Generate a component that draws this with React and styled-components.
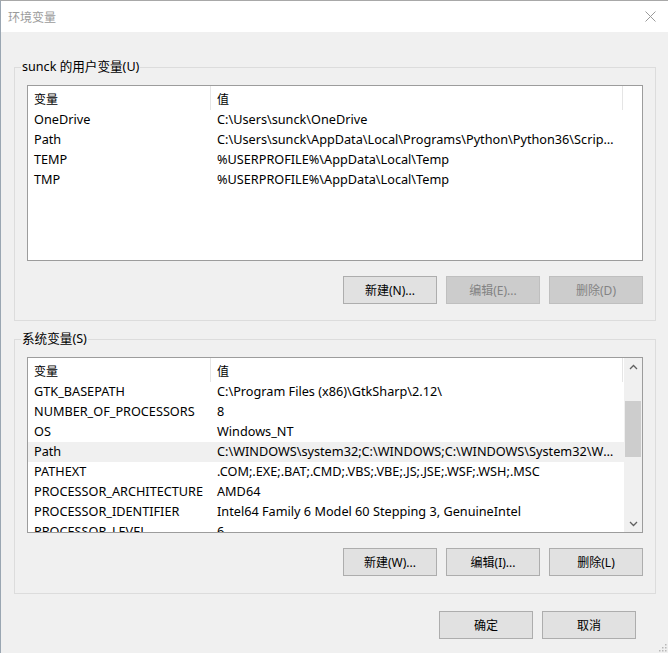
import React from "react";
import styled, { createGlobalStyle } from "styled-components";

const Global = createGlobalStyle`
  html, body { margin: 0; padding: 0; background: #f0f0f0; }
  * { box-sizing: border-box; }
  body { font-family: "Noto Sans", "Noto Sans CJK SC", sans-serif; font-size: 12px; color: #000; }
`;

const Window = styled.div`
  position: relative;
  width: 668px;
  height: 653px;
  background: #f0f0f0;
  border-top: 1px solid #a8a8a8;
  border-left: 1px solid #9aa6b2;
  display: flex;
  flex-direction: column;
  overflow: hidden;
`;

const TitleBar = styled.div`
  height: 31px;
  flex: none;
  background: #fff;
  display: flex;
  align-items: center;
  justify-content: space-between;
  padding: 0 12px 0 7px;
`;

const Title = styled.span`
  font-family: "Noto Sans CJK SC", sans-serif;
  font-size: 12px;
  color: #9b9b9b;
`;

const Body = styled.div`
  flex: 1;
  display: flex;
  flex-direction: column;
  padding: 35px 12px 0 13px;
`;

const Group = styled.div`
  position: relative;
  border: 1px solid #dcdcdc;
  padding: 17px 12px ${(p) => p.$padBottom}px 12px;
  margin-top: ${(p) => p.$mt || 0}px;
  display: flex;
  flex-direction: column;
  gap: 15px;
`;

const Legend = styled.span`
  position: absolute;
  top: -9px;
  left: 6px;
  padding: 0 1px;
  background: #f0f0f0;
  line-height: 16px;
  font-size: 12.6px;
  font-family: "Noto Sans", "Noto Sans CJK SC", sans-serif;
`;

const ListBox = styled.div`
  height: 176px;
  border: 1px solid #9c9c9c;
  background: #fff;
  display: flex;
  overflow: hidden;
`;

const Table = styled.div`
  flex: 1;
  overflow: hidden;
`;

const HeaderRow = styled.div`
  display: grid;
  grid-template-columns: 183px 412px 1fr;
  height: 24px;
`;

const HeaderCell = styled.div`
  display: flex;
  align-items: center;
  padding-left: 6px;
  border-right: ${(p) => (p.$divider ? "1px solid #e5e5e5" : "none")};
  font-family: "Noto Sans CJK SC", sans-serif;
  font-size: 12px;
`;

const Row = styled.div`
  display: grid;
  grid-template-columns: 183px 412px;
  height: 20px;
  background: ${(p) => (p.$hover ? "#f0f0f0" : "transparent")};
`;

const Cell = styled.div`
  padding-left: 6px;
  padding-right: ${(p) => (p.$value ? 5 : 1)}px;
  line-height: 19px;
  font-size: 12.7px;
  white-space: nowrap;
  overflow: hidden;
  text-overflow: ellipsis;
`;

const ScrollBar = styled.div`
  width: 18px;
  flex: none;
  background: #f0f0f0;
  display: flex;
  flex-direction: column;
`;

const Arrow = styled.div`
  height: 17px;
  display: flex;
  align-items: center;
  justify-content: center;
`;

const Track = styled.div`
  flex: 1;
  display: flex;
  flex-direction: column;
  padding: 26px 1px 0 1px;
`;

const Thumb = styled.div`
  height: 56px;
  background: #cdcdcd;
`;

const ButtonRow = styled.div`
  display: flex;
  justify-content: flex-end;
  gap: 9px;
  padding-right: ${(p) => p.$pr || 0}px;
  margin-top: ${(p) => p.$mt || 0}px;
`;

const Button = styled.div`
  width: 94px;
  height: 28px;
  display: flex;
  align-items: center;
  justify-content: center;
  border: 1px solid ${(p) => (p.$disabled ? "#bfbfbf" : "#adadad")};
  background: ${(p) => (p.$disabled ? "#cccccc" : "#e1e1e1")};
  color: ${(p) => (p.$disabled ? "#838383" : "#000")};
  font-size: 12px;
  font-family: "Noto Sans", "Noto Sans CJK SC", sans-serif;
`;

const Grip = styled.svg`
  position: absolute;
  right: 1px;
  bottom: 1px;
`;

const userVars = [
  ["OneDrive", "C:\\Users\\sunck\\OneDrive"],
  ["Path", "C:\\Users\\sunck\\AppData\\Local\\Programs\\Python\\Python36\\Scripts\\;C:\\Users\\sunck\\AppData\\Local\\Programs\\Python\\Python36\\"],
  ["TEMP", "%USERPROFILE%\\AppData\\Local\\Temp"],
  ["TMP", "%USERPROFILE%\\AppData\\Local\\Temp"],
];

const sysVars = [
  ["GTK_BASEPATH", "C:\\Program Files (x86)\\GtkSharp\\2.12\\"],
  ["NUMBER_OF_PROCESSORS", "8"],
  ["OS", "Windows_NT"],
  ["Path", "C:\\WINDOWS\\system32;C:\\WINDOWS;C:\\WINDOWS\\System32\\Wbem;C:\\WINDOWS\\System32\\WindowsPowerShell\\v1.0\\", true],
  ["PATHEXT", ".COM;.EXE;.BAT;.CMD;.VBS;.VBE;.JS;.JSE;.WSF;.WSH;.MSC"],
  ["PROCESSOR_ARCHITECTURE", "AMD64"],
  ["PROCESSOR_IDENTIFIER", "Intel64 Family 6 Model 60 Stepping 3, GenuineIntel"],
  ["PROCESSOR_LEVEL", "6"],
];

function VarList({ rows, scroll }) {
  return (
    <ListBox>
      <Table>
        <HeaderRow>
          <HeaderCell $divider>变量</HeaderCell>
          <HeaderCell $divider>值</HeaderCell>
          <HeaderCell />
        </HeaderRow>
        {rows.map(([k, v, hover]) => (
          <Row key={k} $hover={hover}>
            <Cell>{k}</Cell>
            <Cell $value>{v}</Cell>
          </Row>
        ))}
      </Table>
      {scroll && (
        <ScrollBar>
          <Arrow>
            <svg width="9" height="6" viewBox="0 0 9 6">
              <path d="M1 5 L4.5 1.5 L8 5" fill="none" stroke="#606060" strokeWidth="1.3" />
            </svg>
          </Arrow>
          <Track>
            <Thumb />
          </Track>
          <Arrow>
            <svg width="9" height="6" viewBox="0 0 9 6">
              <path d="M1 1 L4.5 4.5 L8 1" fill="none" stroke="#606060" strokeWidth="1.3" />
            </svg>
          </Arrow>
        </ScrollBar>
      )}
    </ListBox>
  );
}

export default function App() {
  return (
    <Window>
      <Global />
      <TitleBar>
        <Title>环境变量</Title>
        <svg width="11" height="11" viewBox="0 0 11 11">
          <path d="M0.5 0.5 L10.5 10.5 M10.5 0.5 L0.5 10.5" stroke="#9a9a9a" strokeWidth="1" />
        </svg>
      </TitleBar>
      <Body>
        <Group $padBottom={16}>
          <Legend>sunck 的用户变量(U)</Legend>
          <VarList rows={userVars} />
          <ButtonRow>
            <Button>新建(N)...</Button>
            <Button $disabled>编辑(E)...</Button>
            <Button $disabled>删除(D)</Button>
          </ButtonRow>
        </Group>
        <Group $padBottom={17} $mt={18}>
          <Legend>系统变量(S)</Legend>
          <VarList rows={sysVars} scroll />
          <ButtonRow>
            <Button>新建(W)...</Button>
            <Button>编辑(I)...</Button>
            <Button>删除(L)</Button>
          </ButtonRow>
        </Group>
        <ButtonRow $mt={17} $pr={20}>
          <Button>确定</Button>
          <Button>取消</Button>
        </ButtonRow>
      </Body>
      <Grip width="10" height="10" viewBox="0 0 10 10">
        {[[8, 2], [8, 5], [5, 5], [8, 8], [5, 8], [2, 8]].map(([x, y]) => (
          <rect key={`${x}-${y}`} x={x} y={y} width="1.5" height="1.5" fill="#b8b8b8" />
        ))}
      </Grip>
    </Window>
  );
}
